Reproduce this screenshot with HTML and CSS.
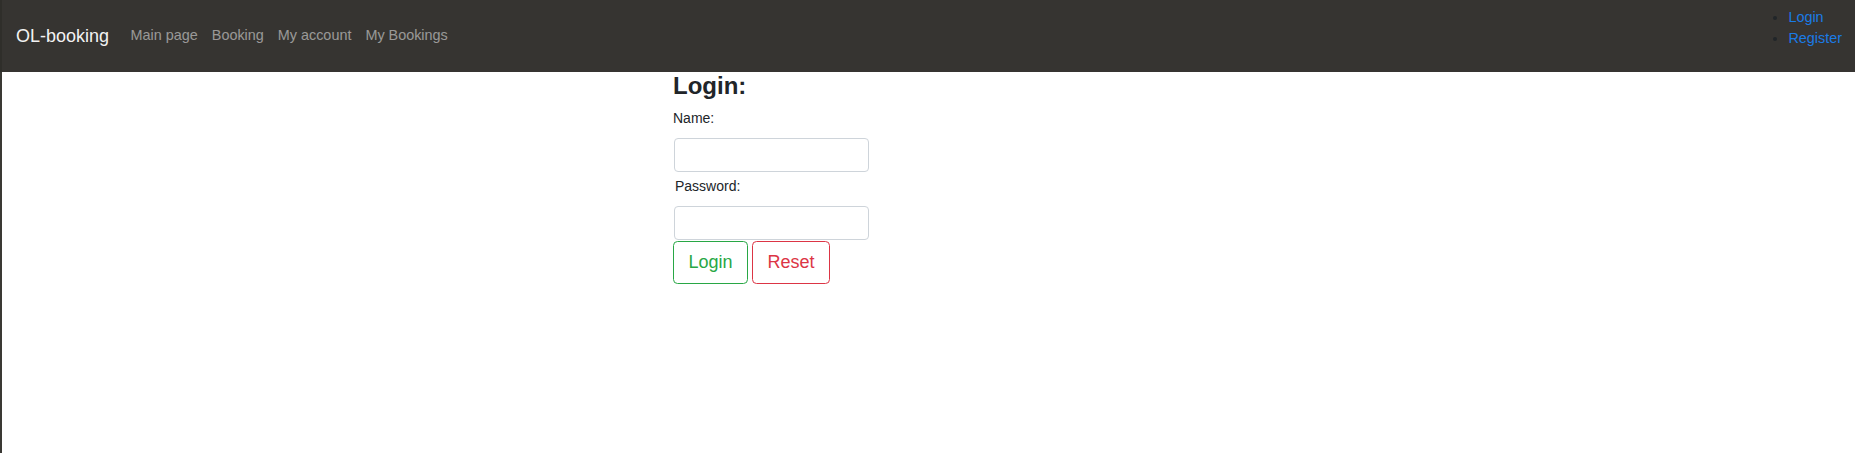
FILE: index.html
```html
<!DOCTYPE html>
<html lang="en">
<head>
<meta charset="utf-8">
<title>OL-booking</title>
<link rel="stylesheet" href="styles.css">
</head>
<body>
<div class="page">
  <nav class="navbar">
    <div class="nav-left">
      <a class="brand" href="#">OL-booking</a>
      <a class="nav-link" href="#">Main page</a>
      <a class="nav-link" href="#">Booking</a>
      <a class="nav-link" href="#">My account</a>
      <a class="nav-link" href="#">My Bookings</a>
    </div>
    <ul class="auth-list">
      <li><a href="#">Login</a></li>
      <li><a href="#">Register</a></li>
    </ul>
  </nav>
  <main class="container">
    <h3 class="title">Login:</h3>
    <form class="login-form">
      <label class="label" for="name">Name:</label>
      <input class="input" id="name" type="text">
      <label class="label label-pw" for="pw">Password:</label>
      <input class="input" id="pw" type="password">
      <div class="actions">
        <button class="btn btn-green" type="submit">Login</button>
        <button class="btn btn-red" type="reset">Reset</button>
      </div>
    </form>
  </main>
</div>
</body>
</html>
```

FILE: styles.css
```css
html, body {
  margin: 0;
  padding: 0;
  height: 100%;
  background: #ffffff;
}
body {
  font-family: "Liberation Sans", Arial, sans-serif;
  color: #212529;
}
.page {
  min-height: 100%;
  border-left: 2px solid #3a3934;
  box-sizing: border-box;
}
.navbar {
  display: flex;
  justify-content: space-between;
  align-items: flex-start;
  height: 72px;
  background: #363431;
  margin-left: -2px;
  border-left: 2px solid #2f2e2a;
}
.nav-left {
  display: flex;
  align-items: center;
  height: 72px;
  padding-left: 14px;
}
.brand {
  font-size: 18px;
  color: #f2f2f2;
  text-decoration: none;
  margin-right: 14.5px;
  line-height: 27px;
}
.nav-link {
  font-size: 14.4px;
  color: rgba(255, 255, 255, 0.5);
  text-decoration: none;
  padding: 0 7px;
  line-height: 21.6px;
}
.auth-list {
  margin: 7px 13px 0 0;
  padding-left: 40px;
  font-size: 14.4px;
  line-height: 21px;
  color: #212529;
}
.auth-list a {
  color: #1a7be6;
  text-decoration: none;
}
.container {
  width: 538px;
  margin: 0 auto;
  padding: 0 13.5px;
  box-sizing: border-box;
}
.title {
  margin: 0 0 7px 0;
  font-size: 24px;
  font-weight: bold;
  line-height: 1.2;
  color: #212529;
}
.login-form {
  display: flex;
  flex-direction: column;
  align-items: flex-start;
}
.label {
  display: block;
  font-size: 14px;
  line-height: 21px;
  margin-bottom: 9px;
}
.label-pw {
  margin-top: 4px;
  padding-left: 2px;
}
.input {
  display: block;
  width: 195px;
  height: 34px;
  box-sizing: border-box;
  margin: 0 0 0 1px;
  border: 1px solid #ced4da;
  border-radius: 4px;
  background: #fff;
  padding: 4px 10px;
  font-family: inherit;
  font-size: 14px;
}
.actions {
  display: flex;
  gap: 4px;
  margin-top: 1px;
}
.btn {
  font-family: "Liberation Sans", Arial, sans-serif;
  font-size: 18px;
  line-height: 27px;
  padding: 7px 14.5px;
  background: transparent;
  border-radius: 4.5px;
  cursor: pointer;
}
.btn-green {
  color: #28a745;
  border: 1px solid #28a745;
}
.btn-red {
  color: #dc3545;
  border: 1px solid #dc3545;
}
```
